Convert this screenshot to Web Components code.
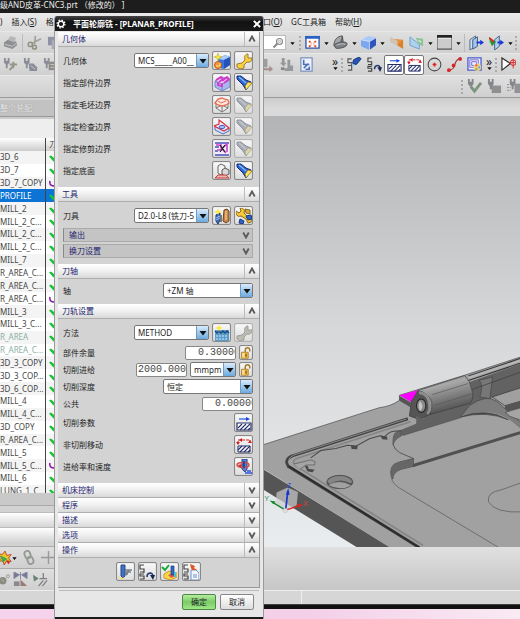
<!DOCTYPE html>
<html lang="zh-CN">
<head>
<meta charset="utf-8">
<title>CNC3.prt</title>
<style>
html,body{margin:0;height:100%}
body{font:8px/12px "Noto Sans","Noto Sans CJK SC",sans-serif;color:#1c1c1c;overflow:hidden}
</style>
</head>
<body>
<cam-app></cam-app>
<script>
const ICONS = {
  gear:'<circle cx="8" cy="8" r="4.500" fill="none" stroke="#fff" stroke-width="2.400"/><circle cx="8" cy="8" r="6.300" fill="none" stroke="#fff" stroke-width="2" stroke-dasharray="2.500 2.450"/>',
  close:'<path d="M3 3l10 10M13 3L3 13" stroke="#fff" stroke-width="3.200"/>',
  up:'<path d="M2.500 13L8 3l5.500 10" fill="none" stroke="#5a5a5a" stroke-width="3.600"/>',
  down:'<path d="M2.500 3L8 13l5.500-10" fill="none" stroke="#5a5a5a" stroke-width="3.600"/>',
  tri:'<path d="M1 4h14L8 13z" fill="#111"/>',
  printer:'<path d="M1 8l4-3 9 2 1 4-5 4-9-3z" fill="#8d8f92"/><path d="M5 5l3-4 6 2-2 5z" fill="#b4b6ba"/><path d="M2 10l8 2 4-3" stroke="#c9c9c9" fill="none"/>',
  scissors:'<path d="M9 1L8 10M15 4L5 9" stroke="#a0a39b" stroke-width="1.800"/><circle cx="3.500" cy="10" r="2.200" fill="none" stroke="#929081" stroke-width="1.600"/><circle cx="8" cy="13" r="2" fill="none" stroke="#929081" stroke-width="1.600"/>',
  docs:'<path d="M1 2h8v9H1z" fill="#8f92a5"/><path d="M5 5h9v10H5z" fill="#a9abb8"/><path d="M7 8h5M7 11h5" stroke="#ddd"/>',
  nav1:'<path d="M1 1h2v3h2V1h2v5L5 8v4H3V8L1 6z" fill="#8b8e99"/><path d="M7 8h8M11 5v7M7 14l6-7" stroke="#96968b" stroke-width="2"/>',
  nav2:'<path d="M1 1h2v3h2V1h2v5L5 8v4H3V8L1 6z" fill="#8b8e99"/><path d="M6 7h5l4 4v4H7z" fill="#898c98"/><path d="M8 9l5 4" stroke="#ccc"/>',
  nav3:'<path d="M1 1h2v3h2V1h2v5L5 8v4H3V8L1 6z" fill="#8b8e99"/><path d="M6 5h9v9H6z" fill="#8f8b86"/><path d="M8 8h5M8 11h5" stroke="#c8c8c8"/>',
  glass:'<circle cx="10" cy="6" r="4" fill="#eef3f8" stroke="#888" stroke-width="1.500"/><circle cx="10" cy="6" r="1.500" fill="none" stroke="#aaa"/><path d="M7 9L2 14" stroke="#888" stroke-width="2.500"/>',
  fit:'<path d="M1 2h14v12H1z" fill="#fff" stroke="#2754a8" stroke-width="1.400"/><path d="M0 1h16v3H0z" fill="#2a62c0"/><path d="M4 6h2v2H4zM10 6h2v2h-2zM4 11h2v2H4zM10 11h2v2h-2zM6 8h1v1H6zM9 8h1v1H9zM6 10h1v1H6zM9 10h1v1H9z" fill="#e0401c"/>',
  orient:'<path d="M1 11C1 5 5 1 10 1L9 9z" fill="#a4a6a8" stroke="#4e5154"/><path d="M10 1l1 8-5 2" fill="#6a6d70" stroke="#4e5154"/><path d="M1 11c2-3 12-5 14-2 1 4-9 6-12 5z" fill="#7e8286" stroke="#4e5154"/><path d="M4 11c3-2 7-2 9-1" fill="none" stroke="#c1c4c7"/>',
  cube:'<path d="M0 5l8-4 8 2-7 4z" fill="#aac9fb"/><path d="M0 5l9 2v9l-9-4z" fill="#7ba6f0"/><path d="M9 7l7-4v8l-7 5z" fill="#2e54bd"/><path d="M0 5l9 2 7-4M9 7v9" fill="none" stroke="#dce8ff" stroke-width=".8"/>',
  planeO:'<path d="M3 4l12 1v9L5 9z" fill="#e5923a"/><path d="M1 2l8 4v5L1 8z" fill="#d0c4b6"/><path d="M15 5v10l-6-4z" fill="#d98028"/>',
  planeG:'<path d="M1 2l10 8v5L1 11z" fill="#aed2ee" stroke="#6aa3cd"/><path d="M7 3l8 1v8l-4-2z" fill="#8cc396"/><path d="M9 5l4 1v3z" fill="#c8ecc8"/>',
  rect:'<path d="M0 1h16v14H0z" fill="#ccc" stroke="#555" stroke-width="1.200"/><path d="M0 0h16v3H0z" fill="#222"/><path d="M1 3h14v1H1z" fill="#eee"/>',
  door:'<path d="M1 5l6-4v11l-6 4z" fill="#d0e2f6" stroke="#4c6586"/><path d="M4 5l5-3v10l-5 3z" fill="#a6c6e8" stroke="#3b5984"/><path d="M8 8h5" stroke="#1836db" stroke-width="2"/><path d="M12 5l4 3-4 3z" fill="#1836db"/>',
  door2:'<path d="M6 5l5-4v11l-5 4z" fill="#b5d0ea" stroke="#40608a"/><path d="M9 8h4" stroke="#1836db" stroke-width="2"/><path d="M12 5l4 3-4 3z" fill="#1836db"/><path d="M0 2l3 3-2 4z" fill="#3b3"/><path d="M1 6l7 1-5 5z" fill="#2c8d3e"/><path d="M0 3l5 4" stroke="#d22b24" stroke-width="2"/>',
  save:'<path d="M1 2h8v9H1z" fill="#9b9da1"/><path d="M2 12h9V9l4 4-4 3v-2H2z" fill="#a88d8d"/>',
  nc:'<path d="M3 1h3v5h2L5 10 1 6h2zM9 3h3v6h3v6H6v-3h3z" fill="#96989c"/><path d="M2 11h4v3H2z" fill="#888"/>',
  ncdoc:'<path d="M2 1h12v14H2z" fill="#eef2ff" stroke="#7e90bb" stroke-width="1.300"/><path d="M5 3v5h6M5 12l5-5M7 13h4v-3" fill="none" stroke="#4d72b2" stroke-width="1.700"/>',
  path1:'<path d="M5 2H1v4h4v3H1M5 9v5H1" fill="none" stroke="#555" stroke-width="1.200"/><path d="M6 7l4 1 5-6-2-2-6 3z" fill="#2754b8" stroke="#14306f"/><path d="M5 6l3 3-2 2z" fill="#8bd0f6"/>',
  path2:'<path d="M5 1H1v4h4v3H1M1 8M5 8v1M5 10H1v2h4v3H1" fill="none" stroke="#444" stroke-width="1.200"/><path d="M8 13c0-5 6-5 6-1" fill="none" stroke="#263b70" stroke-width="1.600"/><path d="M11 11h5l-2 5z" fill="#172856"/>',
  cut:'<path d="M1 8h14v7H1z" fill="#fff" stroke="#222c68" stroke-width="1.200"/><path d="M2 13l4-4M4 15l6-6M8 15l6-6M12 15l2-2" stroke="#26306f" stroke-width="1.100"/><path d="M3 4h8" stroke="#2258dc" stroke-width="1.200"/><path d="M10 2l4 2-4 2z" fill="#1743dc"/>',
  noncut:'<path d="M2 9h12v6H2z" fill="#fff" stroke="#222c68"/><path d="M2 13l4-4M4 15l6-6M8 15l6-6M12 15l2-2" stroke="#26306f" stroke-width="1.100"/><path d="M2 7V3h12v4" fill="none" stroke="#d81e1e" stroke-width="1" stroke-dasharray="3 1"/><path d="M0 5h4L2 8zM12 6h4l-2-3zM6 1v4L3 3z" fill="#d81e1e"/>',
  circle:'<circle cx="8" cy="8" r="6.800" fill="none" stroke="#444" stroke-width="1.100"/><path d="M6 8h4M8 6v4" stroke="#d22" stroke-width="1.800"/>',
  curve:'<path d="M2 14c9 0 4-12 12-12" fill="none" stroke="#a33" stroke-width="1.200"/><circle cx="2" cy="14" r="2" fill="#d32626"/><circle cx="7" cy="9" r="2" fill="#d32626"/><circle cx="14" cy="2" r="2" fill="#d32626"/>',
  layers:'<path d="M1 1h14v13H1z" fill="#eef0ff" stroke="#4b5ec8" stroke-width="1.400"/><path d="M3 3h9v8H3zM5 5h5v4H5z" fill="none" stroke="#7667d3"/><circle cx="11" cy="11" r="4" fill="#f1d181"/><circle cx="10" cy="9" r="1.200" fill="#df5555"/><circle cx="13" cy="11" r="1.200" fill="#5ba5d0"/><circle cx="10" cy="13" r="1.200" fill="#78ae5c"/>',
  play:'<path d="M1 1v13l9-7z" fill="#fff" stroke="#333" stroke-width="1.300"/><circle cx="13" cy="6" r="3" fill="none" stroke="#d22"/><path d="M13 2v10M9 6h7" stroke="#d22"/>',
  vcheck:'<path d="M1 0h2v3h2V0h2v5L5 8H3L1 5z" fill="#85858c"/><path d="M4 8l4 5 7-9" fill="none" stroke="#7c957e" stroke-width="3"/>',
  vblock:'<path d="M1 0h2v3h2V0h2v5L6 8v3H3V8L1 5z" fill="#85868c"/><path d="M5 7h10v8H5z" fill="#8f9094"/>',
  vlist:'<path d="M3 0h2v3h2V0h2v5L7 8v3H5V8L3 5z" fill="#85868c"/><path d="M8 5h8v10H8z" fill="#929398"/><path d="M0 6h4M0 9h4M0 12h4" stroke="#888" stroke-dasharray="2 1"/>',
  star:'<path d="M8 0l2 5 5-1-3 4 3 4-5-1-3 5-1-5-6 1 4-4-4-5 5 1z" fill="#edc629" stroke="#c23b20"/><path d="M3 5l8 4-6 4z" fill="#3aad4a"/><path d="M9 11l5 1-2 3z" fill="#c72626"/>',
  chain:'<g fill="none" stroke="#959a92" stroke-width="2"><rect x="4" y="1" width="6" height="8" rx="3" transform="rotate(-20 7 5)"/><rect x="7" y="7" width="6" height="8" rx="3" transform="rotate(-20 10 11)"/></g>',
  plus:'<path d="M8 1v14M0 8h16" stroke="#999" stroke-width="1.500"/>',
  key:'<circle cx="5" cy="9" r="5" fill="#8d8c80"/><circle cx="12" cy="3" r="2" fill="none" stroke="#888"/><path d="M3 7l4 3" stroke="#bbb"/>',
  mirror:'<path d="M1 0v7l6-4zM15 0v7L9 3zM8 0v8" fill="#77779a" stroke="#88889d"/><path d="M1 10h6v5H1z" fill="#8a8a8d"/><path d="M8 8l7 7H8z" fill="#9b7979"/>',
  perp:'<path d="M0 3l6 4-5 3z" fill="#678376"/><path d="M11 1v6M7 7h8M6 15l5-6M10 15l5-6" stroke="#7e7b80" stroke-width="1.300"/>',
  geom:'<path d="M4 6l7-4 5 2v8l-7 4-5-2z" fill="#3a72df"/><path d="M4 6l7-4 5 2-6 3z" fill="#a9ccf9"/><path d="M10 7l6-3v8l-6 4z" fill="#2552bb"/><circle cx="4" cy="12" r="3.500" fill="#f09a3c" stroke="#c2561b"/><path d="M2 13h4v-3" fill="none" stroke="#ffe36e"/><path d="M4 0l1 3 3 1-3 1-1 3-1-3-3-1 3-1z" fill="#ffe93a" stroke="#b3a316" stroke-width=".5"/>',
  wrench:'<path d="M1 14v-3l5-1 3-3c-1-3 0-6 3-6v4h4c0 3-2 5-5 4l-3 3v3l-4 1z" fill="#f8d046" stroke="#94721e" stroke-width=".9"/>',
  wrenchG:'<path d="M1 14v-3l5-1 3-3c-1-3 0-6 3-6v4h4c0 3-2 5-5 4l-3 3v3l-4 1z" fill="#bcbbb3" stroke="#9a9a94" stroke-width=".9"/>',
  torch:'<path d="M1 1h4l5 4 5 2-5 8-3-5-6-6z" fill="#2d62cf" stroke="#142c70"/><path d="M3 2l7 6" stroke="#7db9f5" stroke-width="1.500"/><path d="M10 15l-1-4 3-4 4 1z" fill="#ffe657" stroke="#796a20" stroke-width=".7"/>',
  torchG:'<path d="M1 1h4l5 4 5 2-5 8-3-5-6-6z" fill="#a7abb5" stroke="#8f95a0"/><path d="M3 2l7 6" stroke="#c4c8ce" stroke-width="1.500"/><path d="M10 15l-1-4 3-4 4 1z" fill="#ddd7a6" stroke="#a7a291" stroke-width=".7"/>',
  part:'<path d="M1 6v6l7 4 8-4V5l-8 4z" fill="#a9b8ec" stroke="#7288cd"/><path d="M1 6l8-4 7 3-8 4z" fill="#e2dcfb" stroke="#8f7bc9"/><path d="M8 9v7" stroke="#7288cd"/><path d="M2 5l5-3 2 2-4 3M8 6l5-4 2 2-5 4M4 7v3l4 1V8" fill="none" stroke="#d638cc" stroke-width="1.800"/>',
  blank:'<path d="M2 5v6l6 4 6-4V5M8 9v6M2 11l6-3 6 3" fill="#ececec" stroke="#777"/><path d="M1 6l3-4 4-1 2 1 4 1 1 3-3 2-4 1-4-1z" fill="#fdeae2" stroke="#e8694c" stroke-width="1.300"/><path d="M4 4l3 2 5-2" fill="none" stroke="#e8694c"/>',
  check:'<path d="M1 7v4l8 4 6-3V9" fill="#d5dff6" stroke="#4772ca"/><path d="M0 7l5-2V1l4 3 6 5-5 3z" fill="#f1ecfb" stroke="#d63240" stroke-width="1.200"/><ellipse cx="8" cy="8" rx="3" ry="1.600" fill="#a9c4f1" stroke="#3e60c7"/>',
  trim:'<path d="M1 2h14v12H1z" fill="#f4eefa"/><path d="M1 2h14M1 6h4M11 14h4M1 14h14M1 10h3" fill="none" stroke="#4a4fbd" stroke-width="1.500"/><path d="M2 4h5v3l5 5M3 9h3l7-6v8" fill="none" stroke="#cb45c9" stroke-width="1.600"/><path d="M6 4l5 7M11 4L6 11" stroke="#222" stroke-width="1.200"/>',
  floor:'<path d="M4 3l3-2 4 2v7l-4 2-3-2z" fill="#f3f3f3" stroke="#666"/><path d="M8 7l3-2 4 2v4l-4 2-3-2z" fill="#d8d8d8" stroke="#555"/><path d="M1 15l3-3h8l3 3z" fill="#e5b8b4" stroke="#cf3a34"/>',
  tool:'<path d="M2 7l4-2v7l-2 4-2-3z" fill="#3e6ec2" stroke="#18356f"/><path d="M2 10l4-2M2 12l4-2" stroke="#a7c8fb"/><path d="M10 2l3-1 2 2v10l-3 2-3-2z" fill="#c98549" stroke="#6a4620"/><path d="M12 3v9" stroke="#ffd7a5"/><path d="M7 7v7" stroke="#777" stroke-width="2"/><path d="M4 0l1 3 3 1-3 1-1 2-1-2-3-1 3-1z" fill="#ffe93a"/>',
  toolset:'<path d="M0 6V3l3 2 2-2-1-3c4 0 5 2 4 5l5 5c2 0 3 2 2 4l-3 1-2-4-5-3c-2 1-4 0-5-2z" fill="#f7c938" stroke="#886817"/><path d="M9 1l5 1v4l-4-1z" fill="#ddab35" stroke="#886817"/><path d="M10 8l5-1 1 4-4 1zM4 11l4 2-1 3-4-1z" fill="#3464c5" stroke="#17377d"/>',
  method:'<path d="M1 5h14v11H1z" fill="#5c9cc9"/><path d="M1 6l2 2 2-2 2 2 2-2 2 2 2-2 2 2" fill="none" stroke="#1c4d86" stroke-width="1.500"/><path d="M2 11h12M2 14h12" stroke="#cdeaff" stroke-width="1.200" stroke-dasharray="2 1"/><path d="M5 0l1 2 3 1-3 1-1 3-1-3-3-1 3-1z" fill="#ffe83a"/>',
  lock:'<path d="M7 7V4c0-4 6-4 6 0v2" fill="none" stroke="#a57f2e" stroke-width="2"/><path d="M2 7h9v8H2z" fill="#f3b93b" stroke="#a37629"/><path d="M3 8h3v6H3z" fill="#ffe29a"/><path d="M8 9v4" stroke="#684610" stroke-width="1.500"/>',
  feed:'<path d="M6 0h5v10l-2 3-3-3z" fill="#5a84d2" stroke="#223f83"/><ellipse cx="7" cy="6" rx="6" ry="2.500" fill="none" stroke="#d74c48" stroke-width="1.500"/><path d="M2 6l4-1-1 4z" fill="#d72c28"/><path d="M8 2v7" stroke="#284a9d" stroke-width="2"/><path d="M9 14h7M11 12h4" stroke="#2a50e2" stroke-width="1.600"/>',
  op1:'<path d="M4 1h4v11l-2 2-2-2z" fill="#4270c4" stroke="#254886"/><path d="M8 6h7M8 8h6M8 10h3M12 6l-3 5" stroke="#778088" stroke-width="1.500"/><path d="M1 12l4 2 2-1-2 3z" fill="#f4db49"/>',
  op3:'<path d="M3 10l5-3 8 2v4l-6 3-7-2z" fill="#f6d944" stroke="#d39332"/><path d="M7 11l5-2 3 3-5 2z" fill="#ea5b3f"/><path d="M10 2h3v9h-3z" fill="#3964bd" stroke="#1d3f8a" stroke-width=".7"/><path d="M13 8h2v5h-2z" fill="#45c5d2"/><path d="M1 3l3 3 4-5" fill="none" stroke="#19a839" stroke-width="2"/>',
  op4:'<path d="M5 1H1v4h4v3H1M5 8M5 10H1v2h4v3H1" fill="none" stroke="#444" stroke-width="1.200"/><path d="M8 6h5l3 3v7H8z" fill="#f4f8ff" stroke="#6c92c6"/><path d="M10 11h4M10 13h4" stroke="#6c92c6"/><path d="M7 0l5 2-1 2 3 2H9l-1-2z" fill="#df552a"/>',
  tick:'<path d="M0 5l4-2 11 9-6 3z" fill="#16c436"/>',
  arc:'<path d="M2 2C0 11 7 14 15 10" fill="none" stroke="#8a14aa" stroke-width="3"/>'
};
const define = (name, html, setup) => customElements.define(name, class extends HTMLElement {
  connectedCallback() {
    if (this.shadowRoot) return;
    const template = document.createElement('template');
    template.innerHTML = typeof html === 'function' ? html(this) : html;
    this.attachShadow({mode:'open'}).append(template.content.cloneNode(true));
    if (setup) setup(this, this.shadowRoot);
  }
});
const ic = (n, s) => `<cam-icon name="${n}"${s ? ` style="--size:${s}px"` : ''}></cam-icon>`;
const tb = (n, label, cls = '') => `<button class="${cls}" aria-label="${label}">${ic(n, 15)}</button>`;
const dd = '<button class="dd" aria-label="更多">' + ic('tri', 5) + '</button>';

define('cam-icon', el => `<style>:host{display:inline-flex;flex:none;width:var(--size,16px);height:var(--size,16px)}svg{width:100%;height:100%}</style>
<svg viewBox="0 0 16 16" aria-hidden="true">${ICONS[el.getAttribute('name')]}</svg>`);

define('cam-titlebar', `<style>:host{display:block;height:13px;line-height:9px;background:#1d1d1d;color:#eee;white-space:pre;overflow:hidden}</style><slot></slot>`);

define('cam-menubar', `<style>:host{display:flex;height:18px;align-items:center;background:linear-gradient(#e9e9e9,#dcdcdc)}
.left{display:flex;gap:9px;width:263px}.right{display:flex;gap:9px}
button{all:unset;white-space:nowrap;line-height:12px}</style>
<div class="left"><button>)</button><button>插入(<u>S</u>)</button><button>格式(<u>R</u>)</button></div>
<div class="right"><button>口(<u>O</u>)</button><button>GC工具箱</button><button>帮助(<u>H</u>)</button></div>`);

define('cam-toolbar', `<style>:host{display:flex;align-items:center;height:22px;box-sizing:border-box;background:linear-gradient(#dfdfdf,#d0d0d0);border-top:1px solid #e8e8e8}
.start{display:flex;align-items:center;width:var(--start,256px);flex:none}.end{display:flex;align-items:center}</style>
<div class="start"><slot name="start"></slot></div><div class="end"><slot></slot></div>`);

const toolCss = `button{all:unset;box-sizing:border-box;display:flex;flex:none;align-items:center;justify-content:center;width:20px;height:20px}
.dd{width:8px;padding-top:2px}.wide{width:12px}.on{background:#fff;border:1px solid #777;border-radius:2px}
i{flex:none;width:4px;height:16px;background:radial-gradient(circle,#aaa 1px,transparent 1px) 0 0/4px 4px}
.sep{width:1px;height:18px;margin:0 1px 0 2px;background:#bbb}`;

define('cam-toolbars', `<style>:host{display:block;border-bottom:1px solid #999}${toolCss}
.find{display:flex;align-items:center;width:24px;height:15px;box-sizing:border-box;background:#fff;border:1px solid #bbb}
.find input{all:unset;width:8px;flex:none}.find button{width:14px;height:13px}
.g{display:flex;align-items:center}.over{width:10px;flex-direction:column;font-size:12px;line-height:8px}.gap{width:14px}
.third{--start:460px}</style>
<cam-toolbar style="--start:262px"><div class="g" slot="start">${tb('printer','打印')}<i class="sep"></i>${tb('scissors','剪切')}${tb('docs','复制')}</div>
<div class="find"><input aria-label="查找命令"><button aria-label="查找">${ic('glass',12)}</button></div><button class="dd wide" aria-label="选项">${ic('tri',5)}</button><i></i>
${tb('fit','适合窗口')}${dd}${tb('orient','定向视图')}${dd}${tb('cube','着色')}${dd}${tb('planeO','编辑截面')}${tb('planeG','剪切截面')}${dd}${tb('rect','背景')}${dd}<i class="sep"></i>${tb('door','显示')}${tb('door2','隐藏')}${dd}<i></i></cam-toolbar>
<cam-toolbar><div class="g" slot="start">${tb('nav1','创建程序')}${tb('nav2','创建刀具')}${tb('nav3','创建几何体')}</div>
${tb('save','保存')}${tb('nc','后处理')}${tb('ncdoc','车间文档')}<span class="gap"></span><button class="over" aria-label="展开工具条">»${ic('tri',5)}</button><i></i>
${tb('path1','编辑刀轨')}${tb('path2','重播刀轨')}${tb('cut','切削移动','on')}${tb('noncut','非切削移动','on')}${tb('circle','圆弧')}${tb('curve','曲线')}${tb('layers','图层')}<button class="over" aria-label="展开工具条 2">»${ic('tri',5)}</button><i></i>${tb('play','播放')}</cam-toolbar>
<cam-toolbar class="third"><i></i>${tb('vcheck','确认')}${tb('vblock','毛坯')}${tb('vlist','列表')}</cam-toolbar>`);

const OPS = ['3D_6','3D_7','3D_7_COPY*','PROFILE','MILL_2','MILL_2_C...','MILL_2_C...','MILL_2_C...','MILL_7','R_AREA_C...','R_AREA_C...','R_AREA_C...*','MILL_3','MILL_3_C...','R_AREA','R_AREA_C...','3D_3_COPY','3D_3_COP...','3D_6_COP...','MILL_4','MILL_4_C...','3D_COPY','R_AREA_C...','MILL_5','MILL_5_C...*','MILL_6','LUNG_1_C...'];
define('cam-navigator', `<style>:host{display:flex;flex-direction:column;background:#d2d2d2;overflow:hidden;border-right:1px solid #aaa}
.filter{height:17px;padding:2px 0;box-sizing:border-box;color:#eee;background:#c2c2c2;border-bottom:1px solid #999;text-shadow:0 0 1px #777;margin-top:2px}
.blank{height:21px;background:#eee;border-top:2px solid #ccc;box-sizing:border-box}
.list{height:356px;overflow:hidden;background:#fff}
table{border-collapse:collapse;table-layout:fixed;width:100%;height:360px;color:#444}
td,th{padding:0;line-height:12px;font-weight:400;text-align:left;white-space:nowrap;overflow:hidden}
th{background:linear-gradient(#fff,#ccc);height:13px}
.n{width:45px;border-right:1px solid #444}th+th,td+td{padding-left:3px}
tbody tr:nth-child(odd){background:#f4f4f4}tbody tr.sel{background:#0b74d4;color:#fff}tr.dim{color:#8bb0a3}
cam-icon{vertical-align:middle}
.bar{height:12px;background:#c9c9c9;margin-bottom:6px;border-bottom:1px solid #aaa}
.sect{height:14px;background:linear-gradient(#fff,#d5d5d5);border-top:1px solid #bbb}
.tools{display:flex;align-items:center;height:22px;background:linear-gradient(#dfdfdf,#cfcfcf);border-top:1px solid #aaa;box-sizing:border-box}
.tools.first{margin-top:4px}${toolCss}.mini{width:10px}</style>
<div class="filter">整个装配</div><div class="blank"></div>
<div class="list"><table><thead><tr><th class="n"></th><th>刀轨</th></tr></thead><tbody>${OPS.map((t,i)=>`<tr class="${i===3?'sel':i===14||i===15?'dim':''}"><td class="n">${t.replace('*','')}</td><td>${ic(t.endsWith('*')?'arc':'tick',8)}</td></tr>`).join('')}</tbody></table></div>
<div class="bar"></div><div class="sect"></div><div class="sect"></div>
<div class="tools first"><button class="mini" aria-label="新建">${ic('star',14)}</button>${dd}${tb('chain','链接')}${tb('plus','添加')}</div>
<div class="tools"><button class="mini" aria-label="约束">${ic('key',12)}</button>${tb('mirror','镜像')}${tb('perp','垂直')}</div>`);

define('cam-viewport', `<style>:host{display:block;overflow:hidden;background:linear-gradient(#b2b4b5,#d7d8d9 50%,#e9ecee)}svg{display:block;width:100%;height:100%}text{font:20px "Liberation Sans",sans-serif}</style>
<svg viewBox="-285 -639 1080 1287" preserveAspectRatio="xMinYMax slice" role="img" aria-label="零件模型">
<defs><linearGradient id="cyl" x1="0" y1="0" x2=".35" y2="1"><stop stop-color="#6f6f6f"/><stop offset=".35" stop-color="#a9a9a9"/><stop offset=".6" stop-color="#858585"/><stop offset="1" stop-color="#505050"/></linearGradient></defs>
<path d="M0 402L405 650H305L0 462z" fill="#555"/>
<path d="M0 350L370 232Q405 228 430 210V195L625 135 800 78V650H402L0 400z" fill="#a1a1a1"/>
<path d="M0 350L370 232Q405 228 430 210V195L625 135 800 78" fill="none" stroke="#444" stroke-width="2"/>
<path d="M640 155L800 98V180L705 202 700 210 640 230 610 262 430 318 430 300 480 280z" fill="#626262"/>
<path d="M636 143L800 88" stroke="#b7b7b7" stroke-width="6"/><path d="M636 151L800 96M636 137L800 82" stroke="#333" stroke-width="3"/>
<path d="M707 200L800 170V210L745 226z" fill="#a0a0a0" stroke="#333" stroke-width="2"/><path d="M745 226L800 210V230L745 245z" fill="#555"/>
<path d="M668 150Q682 165 670 200L700 205 708 140z" fill="#777" stroke="#444" stroke-width="2"/><path d="M640 180L800 123" stroke="#3b3b3b" stroke-width="2"/>
<path d="M640 225Q690 190 722 214L800 283V300Q730 240 610 262z" fill="#7d7d7d" stroke="#444" stroke-width="2"/>
<path d="M746 246L800 230V272L760 258z" fill="#a5a5a5" stroke="#444" stroke-width="2"/>
<path d="M612 262Q690 228 755 265L800 300V308L470 407 472 384 428 358 411 340 413 325 440 315z" fill="#a1a1a1"/>
<path d="M440 315L612 262" stroke="#444" stroke-width="2"/>
<path d="M612 260Q690 230 755 268Q690 240 612 260z" fill="#444" stroke="#444" stroke-width="2"/>
<path d="M470 400L800 299V308L470 410z" fill="#505050"/>
<path d="M411 342Q408 300 434 300V317Q416 325 411 342Q414 356 430 366L472 384M410 445Q392 403 430 394L472 384V407L435 416Q410 425 410 445z" fill="none" stroke="#333" stroke-width="2"/>
<path d="M411 340Q408 304 434 301V317Q416 325 411 340zM410 445Q392 403 430 394L472 384V407L435 416Q410 425 410 445z" fill="#666"/>
<path d="M405 420Q400 455 430 472L727 650M800 454L732 478Q690 485 696 513 715 548 800 543" fill="none" stroke="#555" stroke-width="2"/>
<path d="M455 265L110 376Q85 387 98 407L490 650" fill="none" stroke="#444" stroke-width="9"/>
<path d="M463 274L125 383Q105 391 119 405L500 643" fill="none" stroke="#858585" stroke-width="5"/>
<path d="M450 266L115 373Q92 384 102 402" fill="none" stroke="#aaa" stroke-width="2"/>
<path d="M100 407L490 650" stroke="#2b2b2b" stroke-width="5"/>
<path d="M430 302Q405 300 395 310L385 319 372 316 340 325 300 347 275 344 240 354 195 360 165 382" fill="none" stroke="#4a4a4a" stroke-width="3"/>
<path d="M115 400L165 388 178 393 177 403 152 403 132 416" fill="#a4a4a4" stroke="#555" stroke-width="2"/>
<path d="M373 316L393 318 394 328 379 326zM285 344L305 346 304 356 287 355zM147 405Q160 405 158 414L177 417 170 425 155 422z" fill="#4a4a4a"/>
<ellipse cx="252" cy="454" rx="39" ry="20" fill="#555" stroke="#444" stroke-width="2"/><path d="M218 463Q250 445 286 464Q252 482 218 463z" fill="#a1a1a1"/>
<path d="M214 452Q225 436 252 436T290 453L284 458Q252 440 222 460z" fill="#858585"/>
<path d="M430 195L485 180 465 215z" fill="#f0f"/><path d="M430 197L463 216V231L430 211z" fill="#555"/>
<path d="M465 215L485 182 515 205 522 251 490 267 460 257z" fill="#555" stroke="#333" stroke-width="2"/>
<path d="M485 181L625 136Q640 150 645 175 655 197 642 219L522 252Q535 210 514 196 500 181 485 181z" fill="url(#cyl)" stroke="#3d3d3d" stroke-width="2"/>
<path d="M488 187Q517 190 519 220 523 246 512 249" fill="none" stroke="#8d8d8d" stroke-width="8"/>
<path d="M528 193L635 160M535 225L648 190" stroke="#555" stroke-width="2"/>
<ellipse cx="495" cy="226" rx="14" ry="20" fill="#888" stroke="#222" stroke-width="3"/><path d="M491 212q15 14 2 29-10-9-2-29z" fill="#c5c5c5"/>
<path d="M480 255L500 268 613 235V262L480 286z" fill="#626262"/>
<path d="M63 485L96 470 127 484 123 523 90 540 61 520z" fill="#ccc" opacity=".7"/>
<path d="M90 538L97 480" stroke="#1535d0" stroke-width="5"/><path d="M91 492L98 472 102 492z" fill="#1535d0"/>
<path d="M90 538L50 514" stroke="#16882c" stroke-width="4"/><path d="M42 509l18 3-6 8z" fill="#16882c"/>
<path d="M90 538L134 524" stroke="#d22" stroke-width="4"/><path d="M142 521l-17-2 3 11z" fill="#d22"/>
<circle cx="89" cy="539" r="7" fill="#ddd" stroke="#aaa"/>
<text x="94" y="473" fill="#24d">Z</text><text x="27" y="511" fill="#285">Y</text><text x="143" y="527" fill="#d44">X</text>
</svg>`);

define('cam-section', el => `<style>:host{display:block}
h2{display:flex;align-items:center;justify-content:space-between;box-sizing:border-box;height:15px;margin:0;padding-left:4px;font:inherit;line-height:12px;color:#23236e;background:linear-gradient(#fff,#f2f2f2 45%,#d9d9d9);border-bottom:1px solid #aeaeae}
button{all:unset;display:flex;align-items:center;justify-content:center;width:14px;height:14px;border-left:1px solid #bbb}
.body{padding:4px 6px 4px 5px}:host([closed]) .body{display:none}</style>
<h2><span>${el.getAttribute('title-text')}</span><button aria-label="${el.getAttribute('title-text')}" aria-expanded="${!el.hasAttribute('closed')}">${ic(el.hasAttribute('closed')?'down':'up',8)}</button></h2><div class="body"><slot></slot></div>`);

const b = (n, id, label, off) => `<button id="${id}" class="b${off?' off':''}" aria-label="${label}"${off?' disabled':''}>${ic(n)}</button>`;
const sel = (id, val, cls) => `<span class="s ${cls}"><select id="${id}"><option>${val}</option></select><span class="arr">${ic('tri',8)}</span></span>`;
define('cam-dialog', `<style>:host{display:flex;flex-direction:column;box-sizing:border-box;width:210px;background:#e7e7e7;border:1px solid #999;border-top:0;border-bottom:6px solid #1a1a1a;border-radius:3px 3px 4px 4px;overflow:hidden}
header{display:flex;align-items:center;height:15px;padding:0 1px 0 1px;background:linear-gradient(#444,#111 40%,#1a1a1a);color:#fff}
h1{flex:1;margin:0 0 0 7px;font:bold 8px/14px "Noto Sans","Noto Sans CJK SC",sans-serif}
header button{all:unset;display:flex}
main{margin:1px 3px 0;border-right:1px solid #999;border-bottom:1px solid #999;background:#d3d3d3}
.r{display:flex;align-items:center;gap:3px;height:19px;margin-bottom:3px}.r label:first-child{margin-right:auto}
.r.m{height:15px;margin-bottom:2px}.r.last{margin-bottom:0}
label{white-space:nowrap;line-height:12px}
.b{all:unset;box-sizing:border-box;display:flex;align-items:center;justify-content:center;flex:none;width:19px;height:19px;border:1px solid #888;border-radius:2px;background:linear-gradient(#f8f8f8,#dedede);box-shadow:inset 0 0 1px #999}
.b.off{border-color:#b2b2b2}.lk{width:14px;height:15px}
.s{display:flex;box-sizing:border-box;height:15px;border:1px solid #777;border-radius:2px;background:#fff;overflow:hidden}
select{all:unset;flex:1;min-width:0;padding-left:3px;font-size:8px;line-height:13px;white-space:nowrap;overflow:hidden}
.arr{display:flex;align-items:center;justify-content:center;width:11px;flex:none;background:linear-gradient(#d9ebfb,#6ba9df);border-left:1px solid #6d9cc4;pointer-events:none}
.w75{width:75px}.w90{width:90px}.w46{width:46px}
input{box-sizing:border-box;width:51px;height:14px;padding:0 0 0 12px;margin:0;border:1px solid #888;border-radius:2px;background:#fff;font:10px/12px "Liberation Mono",monospace;color:#444;outline:0}
input.l{padding-left:1px}
.sub{all:unset;display:flex;align-items:center;justify-content:space-between;box-sizing:border-box;width:100%;height:14px;margin-bottom:2px;padding:0 2px 0 5px;border:1px solid #aaa;border-left-color:#888;background:#c4c4c4;color:#23236e;line-height:12px}
.ops{display:flex;justify-content:center;gap:3px;padding-bottom:2px}
footer{display:flex;justify-content:flex-end;gap:4px;margin:2px 4px 0;padding:3px 5px 7px 0;border-top:1px solid #bbb}
footer button{box-sizing:border-box;width:34px;height:16px;padding:0;border:1px solid #888;border-radius:2px;background:linear-gradient(#fff,#ddd);font:inherit;line-height:12px;color:#222}
footer .ok{background:linear-gradient(#b5eca0,#7acc68 50%,#9ce886);border-color:#4b8944}</style>
<header><button aria-label="设置">${ic('gear',10)}</button><h1>平面轮廓铣 - [PLANAR_PROFILE]</h1><button aria-label="关闭">${ic('close',10)}</button></header>
<main>
<cam-section title-text="几何体">
<div class="r"><label for="geo">几何体</label>${sel('geo','MCS_____A00__','w75')}${b('geom','g1','新建几何体')}${b('wrench','g2','编辑几何体')}</div>
<div class="r"><label for="p1">指定部件边界</label>${b('part','p1','指定部件边界')}${b('torch','p2','显示部件边界')}</div>
<div class="r"><label for="p3">指定毛坯边界</label>${b('blank','p3','指定毛坯边界')}${b('torchG','p4','显示毛坯边界',1)}</div>
<div class="r"><label for="p5">指定检查边界</label>${b('check','p5','指定检查边界')}${b('torchG','p6','显示检查边界',1)}</div>
<div class="r"><label for="p7">指定修剪边界</label>${b('trim','p7','指定修剪边界')}${b('torchG','p8','显示修剪边界',1)}</div>
<div class="r"><label for="p9">指定底面</label>${b('floor','p9','指定底面')}${b('torch','p10','显示底面')}</div>
</cam-section>
<cam-section title-text="工具">
<div class="r"><label for="tool">刀具</label>${sel('tool','D2.0-L8 (铣刀-5','w75')}${b('tool','t1','新建刀具')}${b('toolset','t2','编辑刀具')}</div>
<button class="sub">输出${ic('down',8)}</button><button class="sub">换刀设置${ic('down',8)}</button>
</cam-section>
<cam-section title-text="刀轴"><div class="r m"><label for="axis">轴</label>${sel('axis','+ZM 轴','w90')}</div></cam-section>
<cam-section title-text="刀轨设置">
<div class="r"><label for="meth">方法</label>${sel('meth','METHOD','w75')}${b('method','m1','新建方法')}${b('wrenchG','m2','编辑方法',1)}</div>
<div class="r m"><label for="stock">部件余量</label><input id="stock" value="0.30000"><button class="b lk" aria-label="解锁余量">${ic('lock',12)}</button></div>
<div class="r m"><label for="feed">切削进给</label><input id="feed" class="l" value="2000.0000">${sel('unit','mmpm','w46')}<button class="b lk" aria-label="解锁进给">${ic('lock',12)}</button></div>
<div class="r m"><label for="depth">切削深度</label>${sel('depth','恒定','w90')}</div>
<div class="r m"><label for="common">公共</label><input id="common" value="0.00000"></div>
<div class="r"><label for="c1">切削参数</label>${b('cut','c1','切削参数')}</div>
<div class="r"><label for="c2">非切削移动</label>${b('noncut','c2','非切削移动')}</div>
<div class="r"><label for="c3">进给率和速度</label>${b('feed','c3','进给率和速度')}</div>
</cam-section>
<cam-section closed title-text="机床控制"></cam-section><cam-section closed title-text="程序"></cam-section><cam-section closed title-text="描述"></cam-section><cam-section closed title-text="选项"></cam-section>
<cam-section title-text="操作"><div class="ops">${b('op1','o1','生成')}${b('path2','o2','重播')}${b('op3','o3','确认')}${b('op4','o4','列表')}</div></cam-section>
</main>
<footer><button class="ok">确定</button><button>取消</button></footer>`, (el, root) => root.querySelector('#unit').setAttribute('aria-label', '进给单位'));

define('cam-app', `<style>:host{display:flex;flex-direction:column;position:relative;height:100vh;overflow:hidden;background:linear-gradient(90deg,#f5d3ec,#f3d0e8 60%,#f9eaf4)}
.work{display:grid;grid-template-columns:160px minmax(0,1fr);flex:1;min-height:0;background:#d2d2d2}
.right{display:flex;flex-direction:column;min-height:0;min-width:0}.strip{height:18px;background:linear-gradient(#ccc,#dadada 60%)}
cam-viewport{flex:1;min-height:0}.cue{height:43px;background:linear-gradient(#e0e0e0,#c6c6c6)}
.status{display:flex;height:13px;background:#d6d6d6;border-top:1px solid #eee}.status div{width:301px;border-right:1px solid #eee}
.edge{height:5px;background:linear-gradient(#555,#111 30%);margin-bottom:10px}
cam-dialog{position:absolute;left:54px;top:16px}</style>
<cam-titlebar>级AND皮革-CNC3.prt （修改的） ]</cam-titlebar><cam-menubar></cam-menubar><cam-toolbars></cam-toolbars>
<div class="work"><cam-navigator></cam-navigator><div class="right"><div class="strip"></div><cam-viewport></cam-viewport><div class="cue"></div></div></div>
<div class="status"><div></div></div><div class="edge"></div>
<cam-dialog></cam-dialog>`);
</script>
</body>
</html>
